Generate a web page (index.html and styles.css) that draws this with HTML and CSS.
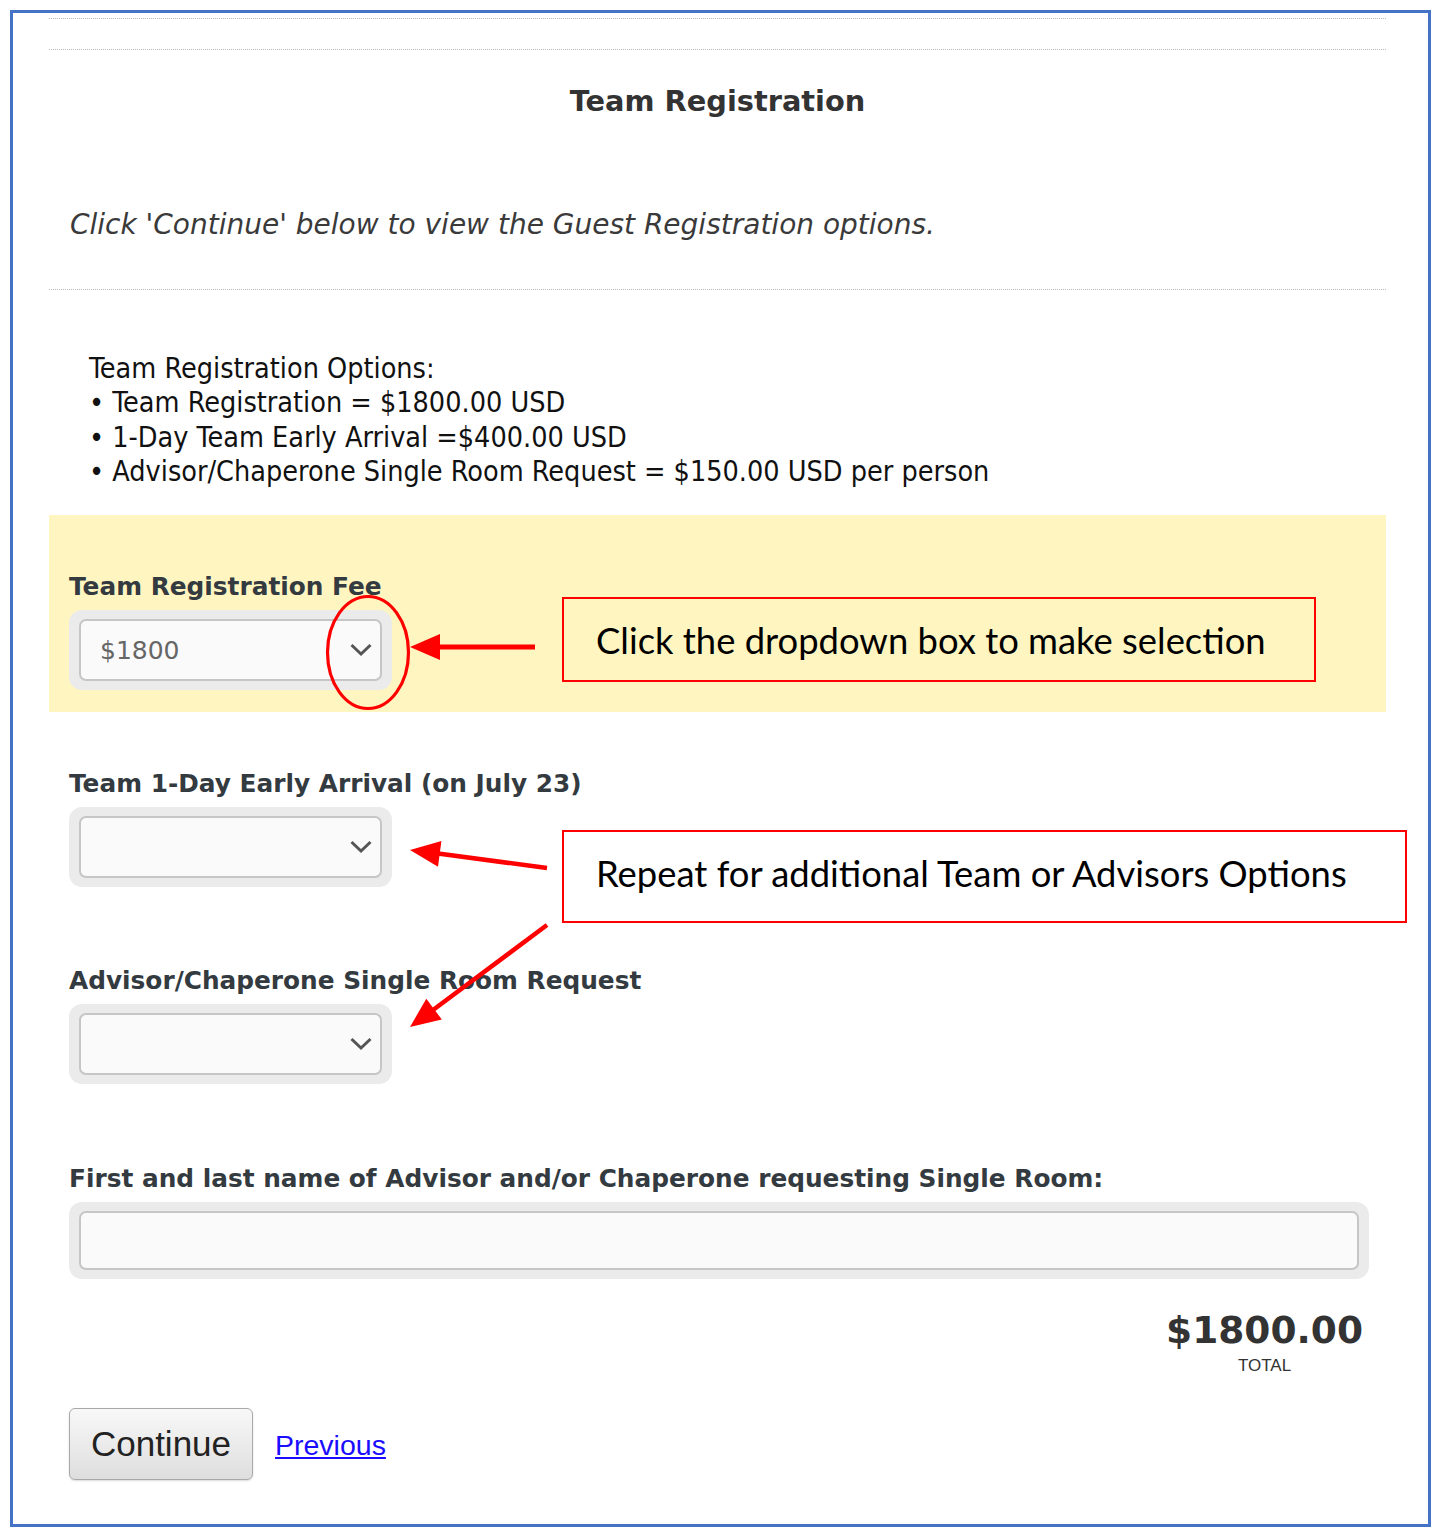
FILE: index.html
```html
<!DOCTYPE html>
<html>
<head>
<meta charset="utf-8">
<title>Team Registration</title>
<link rel="stylesheet" href="styles.css">
</head>
<body>
<div class="frame">
  <div class="rule"></div>
  <div class="rule rule-2"></div>
  <h1 class="title">Team Registration</h1>
  <p class="note">Click 'Continue' below to view the Guest Registration options.</p>
  <div class="rule rule-3"></div>
  <div class="options">
    <div>Team Registration Options:</div>
    <div>• Team Registration = $1800.00 USD</div>
    <div>• 1-Day Team Early Arrival =$400.00 USD</div>
    <div>• Advisor/Chaperone Single Room Request = $150.00 USD per person</div>
  </div>
  <div class="highlight">
    <div class="label">Team Registration Fee</div>
    <div class="well select-well">
      <div class="select"><span class="value">$1800</span><svg class="chev" width="24" height="14" viewBox="0 0 24 14"><path d="M2.5 2 L12 11 L21.5 2" fill="none" stroke="#555" stroke-width="3"/></svg></div>
    </div>
  </div>
  <div class="field field-2">
    <div class="label">Team 1-Day Early Arrival (on July 23)</div>
    <div class="well select-well">
      <div class="select"><span class="value"></span><svg class="chev" width="24" height="14" viewBox="0 0 24 14"><path d="M2.5 2 L12 11 L21.5 2" fill="none" stroke="#555" stroke-width="3"/></svg></div>
    </div>
  </div>
  <div class="field field-3">
    <div class="label">Advisor/Chaperone Single Room Request</div>
    <div class="well select-well">
      <div class="select"><span class="value"></span><svg class="chev" width="24" height="14" viewBox="0 0 24 14"><path d="M2.5 2 L12 11 L21.5 2" fill="none" stroke="#555" stroke-width="3"/></svg></div>
    </div>
  </div>
  <div class="field field-4">
    <div class="label">First and last name of Advisor and/or Chaperone requesting Single Room:</div>
    <div class="well text-well">
      <div class="text-input"></div>
    </div>
  </div>
  <div class="total-row">
    <div class="total">
      <div class="amount">$1800.00</div>
      <div class="total-label">TOTAL</div>
    </div>
  </div>
  <div class="actions">
    <button class="btn">Continue</button>
    <a class="prev" href="#">Previous</a>
  </div>
</div>

<div class="overlay">
  <svg class="annot" width="1439" height="1536" viewBox="0 0 1439 1536">
    <ellipse cx="368" cy="652.5" rx="40.5" ry="56" fill="none" stroke="#f00" stroke-width="3.2"/>
    <line x1="535" y1="647" x2="438" y2="647" stroke="#f00" stroke-width="5"/>
    <polygon points="410,647 440,634 440,660" fill="#f00"/>
    <line x1="547" y1="868" x2="438" y2="853.6" stroke="#f00" stroke-width="4.5"/>
    <polygon points="410,850 441.4,841 438,866.8" fill="#f00"/>
    <line x1="547" y1="925" x2="433" y2="1010" stroke="#f00" stroke-width="4.5"/>
    <polygon points="410,1027 441.8,1019.5 426.3,998.7" fill="#f00"/>
  </svg>
  <div class="callout callout-1">Click the dropdown box to make selection</div>
  <div class="callout callout-2">Repeat for additional Team or Advisors Options</div>
</div>
</body>
</html>
```

FILE: styles.css
```css
html, body {
  margin: 0;
  padding: 0;
  background: #ffffff;
}

body {
  position: relative;
  width: 1439px;
  height: 1536px;
  font-family: "DejaVu Sans", Verdana, sans-serif;
  color: #333333;
}

.frame {
  margin: 10px;
  width: 1421px;
  height: 1517px;
  box-sizing: border-box;
  border: 3px solid #4472c4;
  padding: 5px 42px 0 36px;
}

.rule {
  height: 0;
  border-top: 1px dotted #b9b9b9;
}

.rule-2 {
  margin-top: 30px;
}

.title {
  margin: 34px 0 0;
  font-size: 28.8px;
  line-height: 34px;
  font-weight: bold;
  text-align: center;
  color: #333333;
}

.note {
  margin: 90px 0 0;
  padding-left: 21px;
  font-size: 28px;
  line-height: 34px;
  font-style: italic;
  color: #3a3a3a;
}

.rule-3 {
  margin-top: 47px;
}

.options {
  margin-top: 62px;
  padding-left: 40px;
  font-family: "DejaVu Sans Condensed", "DejaVu Sans", sans-serif;
  font-size: 28.5px;
  line-height: 34.3px;
  color: #111111;
}

.highlight {
  margin-top: 26px;
  background: #fff5c0;
  padding: 57px 20px 22px;
}

.label {
  font-size: 24.8px;
  line-height: 30px;
  font-weight: bold;
  color: #333a40;
}

.well {
  margin-top: 8px;
  background: #ebebeb;
  border-radius: 13px;
  padding: 9px 10px;
  box-sizing: border-box;
}

.select-well {
  width: 323px;
  height: 80px;
}

.select {
  height: 62px;
  box-sizing: border-box;
  border: 2px solid #c6c6c6;
  border-radius: 7px;
  background: #fafafa;
  display: flex;
  align-items: center;
  justify-content: space-between;
  padding: 0 7px 0 19px;
}

.value {
  font-size: 25px;
  color: #666666;
}

.chev {
  display: block;
}

.field {
  padding-left: 20px;
}

.field-2 {
  margin-top: 57px;
}

.field-3 {
  margin-top: 79px;
}

.field-4 {
  margin-top: 80px;
}

.text-well {
  width: 1300px;
  height: 77px;
}

.text-input {
  height: 59px;
  box-sizing: border-box;
  border: 2px solid #c6c6c6;
  border-radius: 7px;
  background: #fafafa;
}

.total-row {
  margin-top: 29px;
  display: flex;
  justify-content: flex-end;
  padding-right: 23px;
}

.total {
  display: flex;
  flex-direction: column;
  align-items: center;
}

.amount {
  font-size: 37.5px;
  line-height: 44px;
  font-weight: bold;
  color: #333333;
}

.total-label {
  margin-top: 4px;
  font-family: "Liberation Sans", Arial, sans-serif;
  font-size: 17px;
  line-height: 20px;
  color: #333333;
}

.actions {
  margin-top: 32px;
  padding-left: 20px;
  display: flex;
  align-items: center;
}

.btn {
  width: 184px;
  height: 72px;
  box-sizing: border-box;
  border: 1px solid #a9a9a9;
  border-radius: 6px;
  background: linear-gradient(#f8f8f8, #dedede);
  font-family: "Liberation Sans", Arial, sans-serif;
  font-size: 35px;
  color: #222222;
  padding: 0;
  box-shadow: 0 1px 2px rgba(0, 0, 0, 0.15);
}

.prev {
  margin-left: 22px;
  margin-top: 2px;
  font-family: "Liberation Sans", Arial, sans-serif;
  font-size: 28.5px;
  color: #1a0dff;
  text-decoration: underline;
}

.overlay {
  position: absolute;
  top: 0;
  left: 0;
  width: 1439px;
  height: 1536px;
  pointer-events: none;
}

.annot {
  position: absolute;
  top: 0;
  left: 0;
}

.callout {
  position: absolute;
  box-sizing: border-box;
  border: 2px solid #ff0000;
  font-family: Lato, "Open Sans", sans-serif;
  font-size: 36.4px;
  color: #000000;
  display: flex;
  align-items: center;
  padding-left: 32px;
}

.callout-1 {
  left: 562px;
  top: 597px;
  width: 754px;
  height: 85px;
}

.callout-2 {
  left: 562px;
  top: 830px;
  width: 845px;
  height: 93px;
  background: #ffffff;
  padding-bottom: 8px;
}
```
